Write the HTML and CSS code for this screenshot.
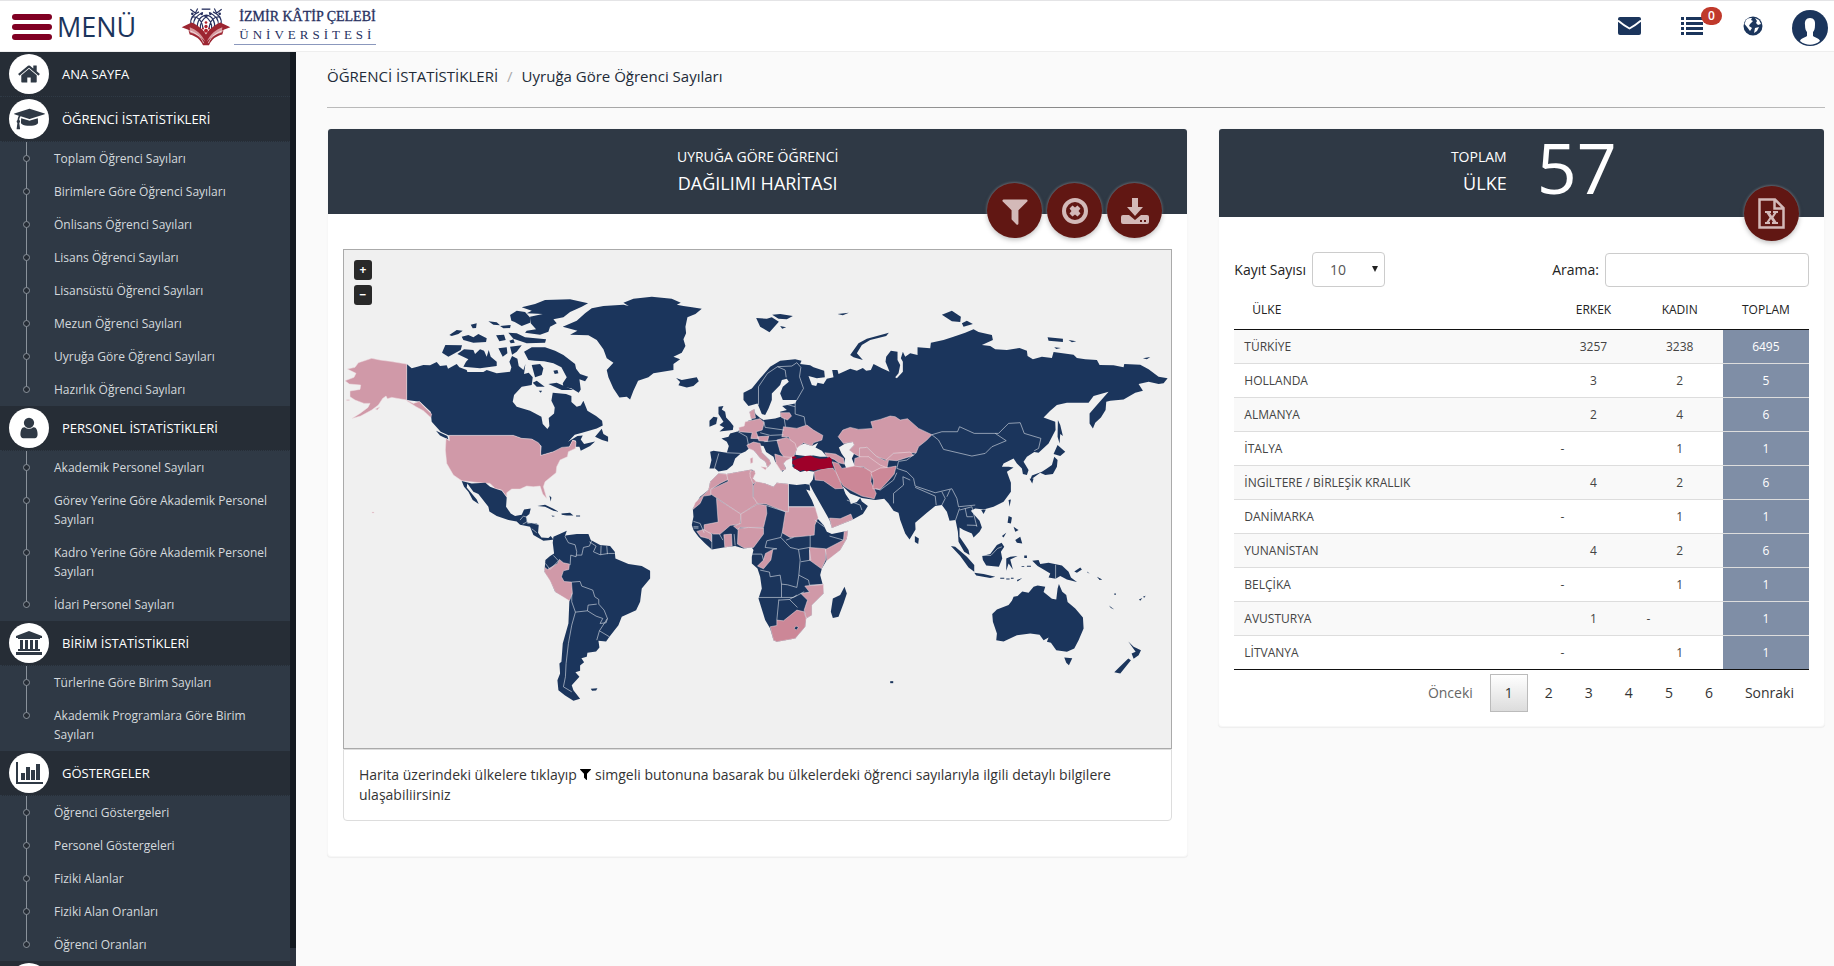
FILE: index.html
```html
<!DOCTYPE html>
<html lang="tr">
<head>
  <meta charset="utf-8">
  <title>Uyruğa Göre Öğrenci Sayıları</title>
  <link rel="stylesheet" href="styles.css">
</head>
<body>
<header class="topbar">
  <button class="menu-btn" type="button">
    <span class="bars"><i></i><i></i><i></i></span>
    MENÜ
  </button>
  <a class="logo" href="#">
    <svg class="logo-mark" viewBox="0 0 150 116">
      <g fill="none" stroke="#27305f" stroke-width="3.500">
        <path d="M30 52C26 34 38 20 54 14M38 56C36 38 46 24 66 16M120 52C124 34 112 20 96 14M112 56C114 38 104 24 84 16"/>
        <path d="M50 64C46 44 58 26 76 24C94 26 104 44 100 64M58 66C56 50 64 36 80 26M92 66C94 50 86 36 70 26M32 30C50 26 64 40 66 66M118 30C100 26 86 40 84 66"/>
        <path d="M28 6L44 18M122 6L106 18M50 4L44 16M100 4L106 16"/>
      </g>
      <g fill="#27305f"><circle cx="34" cy="20" r="4"/><circle cx="116" cy="20" r="4"/><circle cx="62" cy="20" r="4"/><circle cx="88" cy="20" r="4"/><path d="M62 4h26v4H62z"/></g>
      <path d="M2 60L32 46C50 54 68 68 75 82C82 68 100 54 118 46L148 60L128 68L124 82C106 86 92 96 84 114H66C58 96 44 86 26 82L22 68Z" fill="#9c2531"/>
      <path d="M26 60C44 66 62 80 73 104C58 88 42 80 28 77ZM124 60C106 66 88 80 77 104C92 88 108 80 122 77Z" fill="#d79ba0"/>
      <path d="M22 70C44 76 60 88 68 108M128 70C106 76 90 88 82 108" fill="none" stroke="#fff" stroke-width="2"/>
      <g fill="#b0202c"><circle cx="75" cy="46" r="4"/><circle cx="75" cy="58" r="5"/><circle cx="75" cy="71" r="6"/><circle cx="66" cy="64" r="3"/><circle cx="84" cy="64" r="3"/></g>
    </svg>
    <span class="logo-text"><b>İZMİR KÂTİP ÇELEBİ</b><span>ÜNİVERSİTESİ</span></span>
  </a>
  <nav class="tools">
    <a class="tool" href="#" aria-label="Mesajlar"><svg width="23" height="18" viewBox="0 0 23 18"><rect width="23" height="18" rx="2"/><path d="M0 3.500C4 7 8 9.500 11.500 11.500C15 9.500 19 7 23 3.500" fill="none" stroke="#fff" stroke-width="1.800"/></svg></a>
    <a class="tool" href="#" aria-label="Görevler"><svg width="22" height="18" viewBox="0 0 22 18"><path d="M0 0h3v3H0zM5 0h17v3H5zM0 5h3v3H0zM5 5h17v3H5zM0 10h3v3H0zM5 10h17v3H5zM0 15h3v3H0zM5 15h17v3H5z"/></svg><span class="badge">0</span></a>
    <a class="tool" href="#" aria-label="Dil"><svg width="20" height="20" viewBox="0 0 20 20"><circle cx="10" cy="10" r="9.500"/><path d="M3 4C5 2 7 2 9 2L8 4L10 5L7 8L6 10L9 12L7 15L4 11L1.500 8ZM12 2L16 4L18 8L15 9L13 7L14 5ZM12 12L16 11L14 15L11 17Z" fill="#fff"/></svg></a>
    <a class="tool avatar" href="#" aria-label="Profil"><svg width="36" height="36" viewBox="0 0 36 36"><circle cx="18" cy="18" r="18"/><path d="M18 8C22 8 23.500 11 23 15C23 19 22 21 21 22V26C24 28 27 28 28 31C22 36 14 36 8 31C9 28 12 28 15 26V22C14 21 13 19 13 15C12.500 11 14 8 18 8Z" fill="#fff"/></svg></a>
  </nav>
</header>

<div class="wrap">
  <aside class="side">
    <ul class="menu">
      <li><a class="head" href="#"><span class="ico"><svg width="24" height="24" viewBox="0 0 1792 1792"><path d="M1472 992v480q0 26-19 45t-45 19h-384v-384h-256v384h-384q-26 0-45-19t-19-45v-480q0-1 .5-3t.5-3l575-474 575 474q1 2 1 6zm223-69l-62 74q-8 9-21 11h-3q-13 0-21-7l-692-577-692 577q-12 8-24 7-13-2-21-11l-62-74q-8-10-7-23.500t11-21.500l719-599q32-26 76-26t76 26l244 204v-195q0-14 9-23t23-9h192q14 0 23 9t9 23v408l219 182q10 8 11 21.500t-7 23.500z"/></svg></span>ANA SAYFA</a></li>
      <li><a class="head" href="#"><span class="ico"><svg width="31" height="24" viewBox="0 0 2304 1792"><path d="M1774 836l18 316q4 69-82 128t-235 93.500-323 34.500-323-34.500-235-93.500-82-128l18-316 574 181q22 7 48 7t48-7zm530-324q0 23-22 31l-1120 352q-4 1-10 1t-10-1l-652-206q-43 34-71 111.500t-34 178.500q63 36 63 109 0 69-58 107l58 433q2 14-8 25-9 11-24 11h-192q-15 0-24-11-10-11-8-25l58-433q-58-38-58-107 0-73 65-111 11-207 98-330l-333-104q-22-8-22-31t22-31l1120-352q4-1 10-1t10 1l1120 352q22 8 22 31z"/></svg></span>ÖĞRENCİ İSTATİSTİKLERİ</a>
        <ul class="sub">
          <li><a href="#">Toplam Öğrenci Sayıları</a></li>
          <li><a href="#">Birimlere Göre Öğrenci Sayıları</a></li>
          <li><a href="#">Önlisans Öğrenci Sayıları</a></li>
          <li><a href="#">Lisans Öğrenci Sayıları</a></li>
          <li><a href="#">Lisansüstü Öğrenci Sayıları</a></li>
          <li><a href="#">Mezun Öğrenci Sayıları</a></li>
          <li><a href="#">Uyruğa Göre Öğrenci Sayıları</a></li>
          <li><a href="#">Hazırlık Öğrenci Sayıları</a></li>
        </ul>
      </li>
      <li><a class="head" href="#"><span class="ico"><svg width="24" height="24" viewBox="0 0 1792 1792"><path d="M1536 1399q0 109-62.500 187t-150.500 78h-854q-88 0-150.500-78t-62.500-187q0-85 8.500-160.500t31.500-152 58.500-131 94-89 134.500-34.500q131 128 313 128t313-128q76 0 134.500 34.500t94 89 58.500 131 31.500 152 8.500 160.500zm-256-887q0 159-112.500 271.500t-271.500 112.500-271.500-112.500-112.500-271.500 112.500-271.500 271.500-112.500 271.500 112.500 112.500 271.500z"/></svg></span>PERSONEL İSTATİSTİKLERİ</a>
        <ul class="sub">
          <li><a href="#">Akademik Personel Sayıları</a></li>
          <li><a href="#">Görev Yerine Göre Akademik Personel Sayıları</a></li>
          <li><a href="#">Kadro Yerine Göre Akademik Personel Sayıları</a></li>
          <li><a href="#">İdari Personel Sayıları</a></li>
        </ul>
      </li>
      <li><a class="head" href="#"><span class="ico"><svg width="26" height="24" viewBox="0 0 26 24"><path d="M13 0L26 5V7H24V8H2V7H0V5ZM4 9H7V18H9V9H12V18H14V9H17V18H19V9H22V18H24V20H2V18H4ZM0 21H26V24H0Z"/></svg></span>BİRİM İSTATİSTİKLERİ</a>
        <ul class="sub">
          <li><a href="#">Türlerine Göre Birim Sayıları</a></li>
          <li><a href="#">Akademik Programlara Göre Birim Sayıları</a></li>
        </ul>
      </li>
      <li><a class="head" href="#"><span class="ico"><svg width="27" height="22" viewBox="0 0 27 22"><path d="M0 0h2v20h25v2H0zM5 11h4v7H5zM10 5h4v13h-4zM15 8h4v10h-4zM20 2h4v16h-4z"/></svg></span>GÖSTERGELER</a>
        <ul class="sub">
          <li><a href="#">Öğrenci Göstergeleri</a></li>
          <li><a href="#">Personel Göstergeleri</a></li>
          <li><a href="#">Fiziki Alanlar</a></li>
          <li><a href="#">Fiziki Alan Oranları</a></li>
          <li><a href="#">Öğrenci Oranları</a></li>
        </ul>
      </li>
      <li><a class="head" href="#" aria-label="Diğer"><span class="ico"></span></a></li>
    </ul>
    <div class="rail"><div class="rail-bar"></div></div>
  </aside>

  <main class="content">
    <div class="crumbs"><a href="#">ÖĞRENCİ İSTATİSTİKLERİ</a><span class="sep">/</span><span>Uyruğa Göre Öğrenci Sayıları</span></div>
    <hr class="line">
    <div class="row">
      <section class="col map-col">
        <div class="card">
          <div class="card-head">
            <h2>UYRUĞA GÖRE ÖĞRENCİ<strong>DAĞILIMI HARİTASI</strong></h2>
            <div class="fabs">
              <button class="fab" type="button" aria-label="Filtrele"><svg width="32" height="32" viewBox="0 0 1792 1792"><path d="M1595 295q17 41-14 70l-493 493v742q0 42-39 59-13 5-25 5-27 0-45-19l-256-256q-19-19-19-45v-486l-493-493q-31-29-14-70 17-39 59-39h1280q42 0 59 39z"/></svg></button>
              <button class="fab" type="button" aria-label="Temizle"><svg width="26" height="26" viewBox="0 0 26 26"><circle cx="13" cy="13" r="11" fill="none" stroke="#d3b9b8" stroke-width="4"/><path d="M7.500 10.500L10.500 7.500L13 9.500L15.500 7.500L18.500 10.500L16.500 13L18.500 15.500L15.500 18.500L13 16.500L10.500 18.500L7.500 15.500L9.500 13Z"/></svg></button>
              <button class="fab" type="button" aria-label="İndir"><svg width="28" height="26" viewBox="0 0 28 26"><path d="M11 0h6v9h5l-8 9-8-9h5zM2 17h6l6 5 6-5h6q2 0 2 2v5q0 2-2 2H2q-2 0-2-2v-5q0-2 2-2zM19 22v2h2v-2zM23 22v2h2v-2z" fill-rule="evenodd"/></svg></button>
            </div>
          </div>
          <div class="card-body map-body">
            <div class="map">
              <div class="zoom"><button type="button">+</button><button type="button">−</button></div>
              <svg class="world" viewBox="0 0 827 498">
                <!-- kuzey amerika -->
                <g transform="translate(-4 40) scale(.3333)">
                  <path d="M200 222L215 235L232 230L250 225L270 226L290 216L300 228L320 226L324 236L350 222L358 232L380 240L382 246L430 246L440 240L470 250L510 245L514 232L508 215L516 198L532 206L536 228L550 240L556 222L552 252L566 248L578 262L575 285L545 290L522 315L518 335L530 350L570 362L604 380L608 402L622 417L628 408L626 384L642 370L644 352L634 332L638 308L678 312L694 318L694 336L710 350L722 346L730 332L742 362L768 378L786 392L788 406L770 415L726 428L704 434L684 455L712 438L728 436L722 448L732 462L765 454L750 468L722 482L718 470L706 470L708 452L698 450L688 470L640 485L602 496L604 468L575 447L545 445L520 436L327 436L302 425L275 395L272 365L240 335L200 330Z"/>
                  <path d="M765 440L785 416L790 432L804 440L804 455L786 450Z"/>
                  <path d="M288 422L322 438L325 448L300 436Z"/>
                  <path d="M306 188L316 165L366 166L362 180L340 192L325 200Z"/>
                  <path d="M352 192L372 178L400 180L405 192L420 178L432 182L440 200L446 180L452 200L470 215L470 228L420 235L370 230L378 215L385 208Z"/>
                  <path d="M328 135L350 120L368 122L355 132L335 138ZM365 140L385 135L400 142L415 132L440 145L438 156L400 158L370 150ZM392 104L410 100L408 114L398 115ZM445 94L470 97L480 106L460 104ZM468 136L492 134L497 150L478 154ZM480 108L512 105L510 114L490 115ZM475 175L500 172L502 190L488 200ZM510 170L545 166L530 185L516 194ZM505 128L530 130L555 142L618 148L615 158L560 160L520 146ZM508 152L520 148L524 158L512 160Z"/>
                  <path d="M510 75L530 62L555 66L572 85L570 98L545 108L524 96L514 92Z"/>
                  <path d="M545 52L585 42L615 30L690 28L744 40L725 50L690 66L670 82L640 88L650 100L630 110L625 125L600 134L555 128L560 122L588 118L572 100L570 80L608 72L560 70L575 62Z"/>
                  <path d="M552 185L575 172L615 172L645 182L670 195L705 222L708 236L720 252L744 260L735 274L718 268L722 298L716 308L695 295L670 290L668 280L680 262L664 232L640 220L612 214L585 212L565 210Z"/>
                  <path d="M575 225L600 222L610 235L605 255L585 262ZM640 242L652 240L655 250L644 252ZM578 278L590 272L614 290L590 290ZM596 302L606 302L602 308ZM625 282L650 278L700 300L665 300Z"/>
                  <path d="M668 110L710 92L735 70L755 55L790 48L850 44L866 48L850 38L880 26L935 20L995 26L1022 38L1010 44L1030 48L1056 52L1085 56L1066 72L1042 82L1036 110L1038 130L1030 148L1036 168L1025 188L1000 200L1020 208L1000 222L1000 240L940 250L925 262L894 272L880 302L870 328L860 320L838 322L820 295L805 262L800 240L820 218L800 205L790 178L770 150L745 136L690 134L712 122Z"/>
                  <path d="M1008 264L1025 270L1045 266L1070 262L1076 274L1060 288L1040 292L1015 286L1020 276Z"/>
                  <g class="pink">
                    <path d="M200 222L150 214L120 210L95 205L55 218L45 232L22 237L48 250L42 262L15 272L28 282L62 285L60 298L30 303L30 320L45 330L72 340L90 340L84 352L60 370L36 385L62 378L95 360L115 345L128 325L138 318L142 326L155 322L200 330L220 340L238 334L250 348L275 372L272 382L250 362L228 350L200 332Z"/>
                    <path d="M327 436L520 436L545 445L575 447L595 458L602 468L602 496L640 485L665 472L688 470L698 450L708 455L706 475L685 485L682 500L660 510L650 530L648 548L615 575L610 590L620 625L608 612L600 588L580 590L560 588L540 597L515 597L500 608L500 620L485 600L465 595L450 580L420 578L365 572L340 555L320 520L316 480L318 445L328 452Z"/>
                    <path d="M96 666h6v3h-6zM106 357L120 350L112 360ZM20 329h8v2h-8z"/>
                  </g>
                  <path d="M365 573L395 580L436 578L450 590L466 596L485 602L500 622L498 650L512 670L525 678L545 674L552 658L572 655L568 672L558 680L562 698L590 700L596 705L594 728L604 742L625 744L632 738L640 748L632 750L610 752L580 735L570 710L540 704L530 694L505 690L470 678L448 664L445 650L415 612L400 605L382 580L380 592L410 628L416 642L398 630L385 605L372 590Z"/>
                  <path d="M592 648L615 644L640 656L656 665L640 662L615 650ZM664 670L690 668L700 676L680 676L665 674ZM634 676L645 678L638 680ZM708 676h12v3h-12zM628 616L634 622L632 634Z"/>
                  <path class="edge" d="M540 690L550 678L562 682L560 696L548 702M562 700L575 698L596 704M575 716L590 728"/>
                </g>
                <!-- guney amerika -->
                <g transform="translate(156 260) scale(.3333)">
                  <path d="M158 98L160 80L182 70L200 62L196 76L230 72L265 72L272 90L300 105L330 108L344 125L346 145L385 162L425 168L450 182L450 205L425 235L420 275L408 300L365 320L355 345L328 380L318 394L295 392L298 412L288 424L262 428L260 440L244 444L252 456L240 466L240 482L226 486L238 500L215 525L220 540L240 566L220 572L195 556L175 540L172 510L180 490L178 460L184 455L188 400L205 340L208 270L165 245L150 210L133 185L136 150L150 138L162 130Z"/>
                  <path d="M272 536L292 534L288 541L276 542Z"/>
                  <path class="pink" d="M172 160L178 148L190 158L208 162L206 178L190 182L184 200L192 214L214 216L217 250L208 272L166 246L150 212L133 185L134 172L142 178Z"/>
                  <path class="edge" d="M200 66L195 80L205 98L225 104L230 125L228 140L212 135L210 165M228 135L245 135L250 112L268 108L275 90M268 95L288 108L280 125L300 134L325 130L344 130M303 106L302 134M320 108L322 132M214 216L240 214L245 228L278 240L284 260L296 268L296 282L312 300L322 325L318 338L300 340L308 325L288 318L262 302L264 285L290 282M215 250L215 275L226 306L262 302M226 306L215 345L205 400L198 460L196 500L190 530L215 545M322 325L298 362L328 380M298 362L290 390M136 160L150 178L175 152L160 136"/>
                </g>
                <!-- avrupa ve asya -->
                <g transform="translate(336 40) scale(.3333)">
                  <path d="M345 208L364 212L360 222L390 226L400 232L432 242L434 262L410 265L385 258L395 285L408 288L412 278L430 282L440 266L460 262L456 240L472 240L475 252L510 236L530 242L548 234L558 242L572 240L580 222L605 235L628 245L616 215L618 200L632 182L652 185L652 210L660 225L655 250L645 262L650 265L668 245L668 215L662 205L668 185L675 200L690 190L712 195L712 172L750 175L752 158L790 150L820 140L855 128L880 118L895 126L935 135L938 150L905 165L930 168L945 178L980 180L1018 174L1040 182L1042 198L1058 208L1085 200L1115 204L1120 186L1180 194L1190 204L1215 208L1250 210L1258 225L1300 226L1330 232L1332 222L1380 224L1405 238L1435 260L1462 265L1450 280L1435 282L1405 275L1375 282L1388 302L1365 308L1330 328L1290 332L1278 335L1276 360L1262 382L1245 398L1238 415L1228 400L1228 370L1250 345L1285 305L1240 318L1225 338L1160 338L1130 345L1110 362L1090 382L1125 395L1126 420L1105 460L1075 488L1062 486L1040 500L1030 515L1045 540L1040 555L1028 552L1025 535L1010 520L1000 505L970 520L965 530L985 530L1000 532L980 545L992 578L992 605L970 635L940 650L910 658L885 655L872 662L880 672L898 692L905 712L898 725L880 742L875 730L850 720L838 712L838 740L855 765L865 780L868 795L852 785L835 755L833 725L826 690L808 692L800 665L785 645L765 648L740 668L705 698L706 718L688 748L675 730L660 690L655 668L640 662L625 640L612 626L585 630L545 624L510 610L487 588L496 612L508 630L512 642L530 636L540 624L545 634L563 648L548 672L515 690L455 714L448 690L420 640L400 605L388 582L398 568L402 545L378 541L360 546L337 530L336 505L345 500L340 495L318 510L310 520L318 535L306 545L298 530L285 515L280 500L258 486L250 468L238 466L246 488L268 510L272 520L262 532L256 515L240 504L222 482L210 472L196 484L182 490L165 505L158 525L140 540L115 544L105 535L88 535L94 510L90 485L100 482L140 488L146 468L140 455L124 445L145 440L150 430L172 424L195 408L204 392L215 390L208 366L222 357L226 372L240 384L250 390L285 385L302 380L300 365L320 360L306 348L345 340L350 330L308 330L300 310L308 290L326 275L320 266L305 270L300 285L275 310L275 330L265 355L255 375L245 372L232 340L205 348L190 330L190 308L215 295L240 265L270 230L300 212Z"/>
                  <path d="M115 350L130 348L125 358L135 365L138 382L150 395L160 408L158 420L118 424L132 412L118 405L130 395L115 372ZM88 392L100 380L112 382L108 402L88 410Z"/>
                  <path d="M228 84L260 86L275 82L296 95L268 127L240 110ZM276 74L300 72L338 78L320 88L295 86ZM300 108L318 112L306 116ZM472 72L506 68L488 76ZM785 74L815 62L842 80L840 96L815 94ZM845 100L860 92L878 102L850 110ZM1102 142L1148 146L1148 156L1105 152ZM1165 150L1188 154L1175 157ZM1122 172L1142 174L1128 177ZM1388 205L1410 201L1400 208Z"/>
                  <path d="M510 195L535 160L560 146L626 128L618 138L570 150L545 165L530 190L548 210L520 202Z"/>
                  <path d="M1133 390L1140 405L1148 438L1140 432L1138 460L1132 440ZM1132 465L1155 485L1140 498L1120 492ZM1122 500L1132 510L1130 530L1118 552L1095 555L1080 548L1050 570L1055 556L1085 545L1100 535L1115 525ZM1048 566L1060 565L1056 580ZM985 630L992 628L988 650ZM903 660L917 658L910 672ZM704 738L716 745L714 762L704 756Z"/>
                  <g class="sea">
                    <path d="M355 468L372 460L395 468L414 458L406 472L425 482L440 500L420 500L400 496L375 498L345 494L350 475Z"/>
                    <path d="M476 472L495 460L518 456L522 465L508 480L522 490L515 505L525 530L515 540L498 534L492 520L495 505L484 490Z"/>
                  </g>
                  <g class="pink">
                    <path d="M474 440L488 420L510 412L535 418L578 415L572 395L600 388L630 378L645 380L660 390L682 386L715 415L755 434L740 450L715 470L708 488L640 490L620 510L590 500L560 472L538 474L538 500L520 490L508 480L522 465L518 456L490 460Z"/>
                    <path d="M538 474L560 472L590 500L615 512L640 490L690 486L700 496L650 512L625 510L620 535L590 522L565 500L555 506L538 500Z"/>
                    <path d="M524 505L540 500L565 500L600 525L625 535L600 535L575 548L550 530L522 530Z"/>
                    <path d="M310 410L350 415L380 405L400 420L428 436L425 450L400 458L395 468L370 458L345 478L325 440L305 440Z"/>
                    <path d="M290 450L320 442L345 460L350 478L340 500L315 506L300 485Z"/>
                    <path d="M195 395L240 386L252 398L246 420L228 425L236 446L212 445L216 428L178 425L176 412L192 408ZM208 366L222 357L226 384L212 386ZM300 368L328 368L334 378L322 390L304 382ZM232 440L266 438L262 454L236 452ZM200 465L220 456L240 460L246 488L268 510L272 520L262 532L256 515L240 504L222 482L205 475Z"/>
                    <path d="M284 492L310 500L336 502L318 512L310 520L318 538L302 542L288 520ZM210 505L218 502L218 518L211 520ZM242 530L260 532L256 540ZM434 488L466 492L490 505L492 522L475 518L462 508L440 500Z"/>
                    <path class="mid" d="M456 515L475 520L485 535L522 528L550 532L575 546L572 575L588 610L582 626L545 618L510 600L490 588L478 570L468 548Z"/>
                    <path class="mid" d="M402 545L430 536L458 534L468 548L480 575L488 595L465 596L430 572L405 570ZM572 548L600 534L625 532L648 528L642 552L622 575L600 598L578 596L580 572Z"/>
                    <path d="M448 684L480 686L512 672L518 688L455 714Z"/>
                  </g>
                  <path class="red" d="M337 512L350 506L362 504L376 498L392 497L404 503L418 506L436 505L448 501L456 508L454 516L459 532L444 534L430 537L412 538L402 542L390 540L380 544L370 540L360 543L350 538L340 534L344 526L336 520ZM335 501L344 498L350 503L338 508Z"/>
                  <path class="edge" d="M235 345L235 290L262 250L292 230L315 240L318 262M292 230L335 228L350 218L362 232L358 260L370 295L350 330M308 340L345 350M345 335L345 372L372 380L376 405M316 410L312 385M250 392L255 412L312 420M240 428L270 436L310 434M252 455L300 450M755 434L785 425L832 425L838 410L882 430L955 430L985 400L1020 398L1032 430L1082 445L1075 475L1062 482M755 434L775 450L790 478L875 498L915 490L935 470L978 452L945 430M708 488L680 510L655 514L650 535L680 545L700 565L705 588L765 608L815 596L830 625L835 650L885 645M705 592L765 618L768 645M640 640L640 610L670 585L668 560L690 570M785 605L795 625L785 645M810 598L800 620M838 655L826 690M838 660L875 650L885 690L890 710M855 655L860 680L878 680M860 705L890 706M116 490L102 538M140 488L182 490M172 424L200 440L205 465M500 630L540 645L545 660M588 596L600 600L640 570L650 548"/>
                </g>
                <!-- afrika -->
                <g transform="translate(336 210) scale(.3333)">
                  <path d="M115 40L140 42L160 38L215 28L225 35L218 55L225 65L255 70L280 80L290 68L325 72L350 75L375 72L388 74L390 92L378 88L395 120L405 145L412 175L430 195L440 215L455 222L503 212L500 235L480 270L440 300L425 325L420 345L428 375L430 400L395 435L395 465L378 475L375 500L345 535L290 545L280 540L270 505L255 480L235 415L245 385L240 350L232 325L215 310L215 290L220 270L215 262L190 265L165 258L130 262L95 268L75 250L55 230L40 210L35 195L40 170L38 145L60 110L85 90L90 65Z"/>
                  <path d="M493 380L500 400L490 430L475 470L458 474L452 455L458 415L480 405Z"/>
                  <g class="pink">
                    <path d="M115 40L140 42L144 58L120 70L92 88L92 105L70 108L60 130L38 148L45 128L85 90L90 65Z"/>
                    <path d="M140 42L160 38L215 28L210 40L218 70L218 110L232 130L182 162L92 102L92 88L144 64Z"/>
                    <path d="M210 34L222 30L226 40L218 55L228 64L220 72L210 50Z"/>
                    <path d="M228 64L255 70L280 80L290 68L325 72L325 155L316 155L258 132L232 130L220 112L220 76Z"/>
                    <path d="M109 115L182 162L180 192L150 196L120 222L100 222L96 220L72 218L72 194L114 186Z"/>
                    <path d="M182 162L232 132L258 136L260 160L250 202L180 202L172 208L160 198L182 190Z"/>
                    <path d="M325 140L404 140L414 172L404 195L402 225L375 228L330 232L306 218L316 155L325 155Z"/>
                    <path d="M174 206L205 202L250 204L250 222L220 262L192 264L172 252ZM131 224L154 222L156 258L134 262ZM50 214L70 208L94 222L94 245L86 236L72 232L62 230Z"/>
                    <path d="M232 318L250 300L256 280L278 268L272 300L250 326ZM388 262L436 266L436 300L424 326L388 300ZM436 268L490 240L492 215L503 212L500 235L480 270L440 302Z"/>
                    <path d="M374 378L430 372L430 400L395 435L395 465L378 475L372 450L382 420L362 400L388 396Z"/>
                    <path class="mid" d="M270 500L290 496L290 480L310 482L350 450L372 455L378 475L375 500L345 535L290 545L280 540ZM342 504L348 510L355 502L348 498Z" fill-rule="evenodd"/>
                  </g>
                  <path class="edge" d="M325 72L325 140L404 140M258 136L316 155M306 218L302 232L260 242L255 262L290 266M302 232L330 262L355 268L388 262M318 240L340 232M404 180L432 200M390 225L390 262M430 195L425 185M448 228L490 240M388 270L392 300L362 305M355 268L360 300L356 345L385 360L388 375L428 374M278 268L290 266M240 330L268 336L270 350L300 345L304 372L322 374L350 382L356 345M304 372L304 412L235 412M304 412L340 412L372 395M296 418L290 480M296 420L328 418L352 442M328 418L350 405M215 282L245 282L250 300M95 222L95 268M118 222L128 240M72 218L60 190L40 184M40 200L55 200M40 204L55 204M162 222L165 256"/>
                </g>
                <!-- okyanusya -->
                <g transform="translate(556 230) scale(.3333)">
                  <path d="M276 402L290 388L325 375L335 362L340 350L352 348L366 334L385 338L400 320L412 316L435 320L430 336L455 356L468 358L472 325L476 312L486 335L498 345L502 366L525 385L548 412L550 445L535 480L522 505L500 515L468 510L452 488L440 485L445 472L430 480L418 464L390 460L350 465L310 484L288 480L290 460L278 425ZM492 532L516 534L506 555L498 548ZM684 484L700 500L722 510L715 525L700 536L694 520L706 515ZM684 535L692 540L660 580L642 576L660 558Z"/>
                  <path d="M152 198L165 200L200 230L222 255L222 275L205 262L180 228ZM222 278L250 282L285 290L270 294L228 286ZM246 228L270 222L290 195L304 188L312 200L302 215L306 235L296 260L258 256L248 240ZM318 235L330 230L352 228L330 238L338 268L325 250L318 272ZM396 242L415 240L420 252L445 248L485 256L505 275L512 292L530 306L500 298L480 288L466 296L445 292L450 280L430 268L412 258ZM522 274L540 262L545 268L530 278ZM560 274L568 280L562 278ZM590 290L606 298L598 300ZM325 108L335 112L332 130L322 128ZM340 140L355 150L345 155ZM345 180L360 170L366 190L350 188ZM305 168L318 158L310 172ZM372 226h8v8h-8zM300 293h12v3h-12zM318 295h10v3h-10zM332 293h8v3h-8zM350 300L366 294L352 304ZM364 258h8v2h-8zM380 257h12v3h-12zM626 376L642 388L632 384ZM716 358L726 354L720 362ZM728 350L736 347L732 353ZM642 340h5v4h-5z"/>
                  <path class="edge" d="M246 226L272 226L292 205L305 200M466 254L466 296"/>
                </g>
                <path d="M546 431h3v2h-3z"/>
              </svg>
            </div>
            <p class="note">Harita üzerindeki ülkelere tıklayıp <svg width="11" height="11" viewBox="192 256 1408 1408"><path d="M1595 295q17 41-14 70l-493 493v742q0 42-39 59-13 5-25 5-27 0-45-19l-256-256q-19-19-19-45v-486l-493-493q-31-29-14-70 17-39 59-39h1280q42 0 59 39z"/></svg> simgeli butonuna basarak bu ülkelerdeki öğrenci sayılarıyla ilgili detaylı bilgilere ulaşabiliirsiniz</p>
          </div>
        </div>
      </section>

      <section class="col table-col">
        <div class="card">
          <div class="card-head total">
            <h2>TOPLAM<strong>ÜLKE</strong></h2>
            <div class="number">57</div>
            <div class="fabs">
              <button class="fab" type="button" aria-label="Excel"><svg width="27" height="31" viewBox="0 0 27 31"><path d="M1.500 1.500H17L25.500 10V29.500H1.500ZM16.500 2V10.500H25" fill="none" stroke="#d3b9b8" stroke-width="2.500"/><path d="M7 13h6v2h-1l2 3 2-3h-1v-2h5v2h-1.500l-3 4.500 3 4.500H20v2h-6v-2h1l-2-3-2 3h1v2H7v-2h1.500l3-4.500-3-4.500H7z"/></svg></button>
            </div>
          </div>
          <div class="card-body">
            <div class="filters">
              <label>Kayıt Sayısı <span class="select"><select><option>10</option><option>25</option><option>50</option></select></span></label>
              <label>Arama: <input type="search"></label>
            </div>
            <table class="list">
              <thead><tr><th>ÜLKE</th><th>ERKEK</th><th>KADIN</th><th>TOPLAM</th></tr></thead>
              <tbody>
                <tr><td>TÜRKİYE</td><td>3257</td><td>3238</td><td>6495</td></tr>
                <tr><td>HOLLANDA</td><td>3</td><td>2</td><td>5</td></tr>
                <tr><td>ALMANYA</td><td>2</td><td>4</td><td>6</td></tr>
                <tr><td>İTALYA</td><td class="none">-</td><td>1</td><td>1</td></tr>
                <tr><td>İNGİLTERE / BİRLEŞİK KRALLIK</td><td>4</td><td>2</td><td>6</td></tr>
                <tr><td>DANİMARKA</td><td class="none">-</td><td>1</td><td>1</td></tr>
                <tr><td>YUNANİSTAN</td><td>4</td><td>2</td><td>6</td></tr>
                <tr><td>BELÇİKA</td><td class="none">-</td><td>1</td><td>1</td></tr>
                <tr><td>AVUSTURYA</td><td>1</td><td class="none">-</td><td>1</td></tr>
                <tr><td>LİTVANYA</td><td class="none">-</td><td>1</td><td>1</td></tr>
              </tbody>
            </table>
            <nav class="pages">
              <a class="page off" href="#">Önceki</a>
              <a class="page current" href="#">1</a>
              <a class="page" href="#">2</a>
              <a class="page" href="#">3</a>
              <a class="page" href="#">4</a>
              <a class="page" href="#">5</a>
              <a class="page" href="#">6</a>
              <a class="page" href="#">Sonraki</a>
            </nav>
          </div>
        </div>
      </section>
    </div>
  </main>
</div>
</body>
</html>
```

FILE: styles.css
```css
* {
  box-sizing: border-box;
}
body {
  margin: 0;
  height: 100vh;
  display: flex;
  flex-direction: column;
  overflow: hidden;
  background: #fafafa;
  color: #333;
  font: 14px/20px "Open Sans", "Noto Sans", sans-serif;
}
a {
  color: inherit;
  text-decoration: none;
}
ul {
  list-style: none;
  margin: 0;
  padding: 0;
}
button, input, select {
  font: inherit;
}

/* ust bar */
.topbar {
  flex: none;
  display: flex;
  align-items: center;
  height: 52px;
  padding: 0 6px 0 12px;
  background: #fff;
  border-top: 1px solid #e4e4e6;
  border-bottom: 1px solid #eee;
}
.menu-btn {
  display: flex;
  align-items: center;
  gap: 5px;
  padding: 2px 0 0;
  border: 0;
  background: none;
  color: #1b355c;
  font-size: 27px;
  font-weight: 500;
  line-height: 36px;
}
.bars {
  display: grid;
  gap: 4px;
  width: 40px;
}
.bars i {
  height: 6px;
  border-radius: 3px;
  background: #800023;
}
.logo {
  display: flex;
  align-items: center;
  margin-left: 45px;
  color: #27305f;
}
.logo-mark {
  width: 50px;
  height: 39px;
}
.logo-text {
  display: flex;
  flex-direction: column;
  margin-left: 3px;
  padding: 0 0 0 5px;
  border-bottom: 1px solid #8b98bd;
  font: 14px/18px "Liberation Serif", serif;
}
.logo-text b {
  font-weight: normal;
  -webkit-text-stroke: .3px;
}
.logo-text span {
  letter-spacing: 4px;
  font-size: 13px;
}
.tools {
  display: flex;
  align-items: center;
  gap: 40px;
  margin-left: auto;
}
.tool {
  position: relative;
  display: flex;
  fill: #1b355c;
}
.tool.avatar {
  margin: 4px 0 0 -11px;
}
.badge {
  position: absolute;
  left: 20px;
  top: -10px;
  width: 21px;
  height: 18px;
  border-radius: 9px;
  background: #c0392b;
  color: #fff;
  font-size: 12px;
  font-weight: 600;
  line-height: 18px;
  text-align: center;
}

/* sol menu */
.wrap {
  flex: 1;
  display: flex;
  min-height: 0;
}
.side {
  flex: none;
  display: flex;
  width: 296px;
  overflow: hidden;
  background: #2f3945;
}
.menu {
  flex: 1;
}
.rail {
  width: 6px;
  background: #2b323d;
}
.rail-bar {
  height: 98%;
  background: #141a21;
}
.head {
  display: flex;
  align-items: center;
  gap: 13px;
  height: 45px;
  padding-left: 9px;
  border-bottom: 1px dotted #2f3a46;
  background: #262d36;
  color: #fff;
  font-size: 13px;
}
.ico {
  display: flex;
  align-items: center;
  justify-content: center;
  width: 40px;
  height: 40px;
  border-radius: 50%;
  background: #fff;
  fill: #2f3945;
}
.sub li {
  position: relative;
  padding: 7px 15px 7px 54px;
  color: #d5d9dd;
  font-size: 12px;
  line-height: 19px;
}
.sub li::before {
  content: "";
  position: absolute;
  left: 26px;
  top: 0;
  bottom: 0;
  width: 1px;
  background: #8a929b;
}
.sub li:last-child::before {
  bottom: auto;
  height: 20px;
}
.sub li::after {
  content: "";
  position: absolute;
  left: 23px;
  top: 13px;
  width: 5px;
  height: 5px;
  border: 1px solid #8a929b;
  border-radius: 50%;
  background: #262d36;
}

/* icerik */
.content {
  flex: 1;
  min-width: 0;
  padding: 13px 9px 0 31px;
}
.crumbs {
  color: #222b38;
  font-size: 15px;
  font-weight: 500;
  line-height: 22px;
}
.sep {
  padding: 0 9px;
  color: #aaa;
}
.line {
  height: 1px;
  margin: 20px 0 20px;
  border: 0;
  background: linear-gradient(to right, #bbb, #888, #bbb);
}
.row {
  display: flex;
  align-items: flex-start;
  margin: 0 -15px;
}
.col {
  padding: 0 15px;
}
.map-col {
  width: 58.3333%;
}
.table-col {
  width: 41.6667%;
}
.card {
  border: 1px solid #f7f7f7;
  border-radius: 4px;
  background: #fff;
  box-shadow: 0 1px 1px #0000000d;
}
.card-head {
  position: relative;
  height: 85px;
  padding-top: 14px;
  border-radius: 3px 3px 0 0;
  background: #2f3945;
  color: #fff;
}
.card-head h2 {
  margin: 0;
  font-size: 14px;
  font-weight: normal;
  line-height: 27px;
  text-align: center;
}
.card-head strong {
  display: block;
  font-size: 18px;
  font-weight: normal;
}
.total {
  display: grid;
  grid-template-columns: 1fr 1fr;
  height: 88px;
}
.total h2 {
  padding-right: 15px;
  text-align: right;
}
.number {
  margin-top: -14px;
  padding-left: 15px;
  font-size: 70px;
  line-height: 76px;
}
.fabs {
  position: absolute;
  right: 25px;
  bottom: -24px;
  display: flex;
  gap: 5px;
}
.fab {
  display: flex;
  align-items: center;
  justify-content: center;
  width: 55px;
  height: 55px;
  padding: 0;
  border: 0;
  border-radius: 50%;
  background: #611713;
  box-shadow: 0 2px 5px #00000040, 0 0 3px #ffffff80;
  fill: #d3b9b8;
}
.card-body {
  padding: 35px 15px 14px;
}
.map-body {
  padding-bottom: 35px;
}
.map {
  position: relative;
  border: 1px solid #aaa;
  background: #f0f0f0;
}
.world {
  display: block;
  width: 100%;
  fill: #1b355c;
}
.pink {
  fill: #d099a8;
  stroke: #efe0e5;
  stroke-width: 1.5;
}
.mid {
  fill: #cc8797;
}
.red {
  fill: #9e0029;
}
.sea {
  fill: #f0f0f0;
}
.edge {
  fill: none;
  stroke: #dde2ea;
  stroke-width: 1.8;
  stroke-linejoin: round;
}
.zoom {
  position: absolute;
  left: 10px;
  top: 10px;
  display: grid;
  gap: 5px;
}
.zoom button {
  width: 18px;
  height: 20px;
  padding: 0;
  border: 0;
  border-radius: 3px;
  background: #292929;
  color: #fff;
  font-size: 12px;
  font-weight: bold;
  line-height: 18px;
}
.note {
  margin: 0;
  padding: 15px;
  border: 1px solid #ddd;
  border-radius: 0 0 4px 4px;
}

/* tablo */
.filters {
  display: flex;
  justify-content: space-between;
}
.filters label {
  display: flex;
  align-items: center;
  gap: 6px;
  color: #222;
  font-weight: 500;
}
.filters input {
  width: 204px;
  height: 34px;
  padding: 0 10px;
  border: 1px solid #ccc;
  border-radius: 4px;
  background: #fff;
}
.select {
  position: relative;
}
.select::after {
  content: "";
  position: absolute;
  right: 7px;
  top: 14px;
  border: 3px solid transparent;
  border-top: 6px solid #222;
  border-bottom: 0;
}
.select select {
  display: block;
  width: 73px;
  height: 35px;
  padding: 0 17px;
  border: 1px solid #ccc;
  border-radius: 4px;
  appearance: none;
  background: #fff;
  color: #555;
  font-weight: normal;
}
.list {
  width: 100%;
  margin-top: 4px;
  table-layout: fixed;
  border-collapse: collapse;
  border-bottom: 1px solid #111;
  color: #444;
  font-size: 12px;
}
.list th {
  width: 15%;
  height: 38px;
  padding: 0;
  border-bottom: 1px solid #111;
  color: #222;
  font-weight: normal;
}
.list th:first-child {
  width: 55%;
  padding-left: 18px;
  text-align: left;
}
.list td {
  height: 34px;
  padding: 2px 10px 0;
  border-top: 1px solid #ddd;
  text-align: center;
}
.list tr:nth-child(odd) td {
  background: #f9f9f9;
}
.list td:first-child, .list td.none {
  text-align: left;
}
.list tr td:last-child {
  background: #7f8ea6;
  color: #fff;
  font-weight: 500;
}
.pages {
  display: flex;
  justify-content: flex-end;
  gap: 2px;
  margin-top: 4px;
}
.page {
  min-width: 38px;
  padding: 8px 14px;
  border: 1px solid transparent;
  color: #333;
  text-align: center;
}
.page.off {
  color: #666;
}
.page.current {
  border-color: #bbb;
  background: linear-gradient(#fff, #dcdcdc);
}
```
